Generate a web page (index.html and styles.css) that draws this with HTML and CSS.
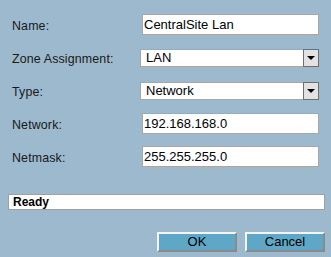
FILE: index.html
```html
<!DOCTYPE html>
<html lang="en">
<head>
    <meta charset="UTF-8">
    <title>Zone</title>
    <link rel="stylesheet" href="styles.css">
</head>
<body>
    <div class="dialog">
        <div class="form">
            <label class="label">Name:</label>
            <input class="field" type="text" value="CentralSite Lan">

            <label class="label">Zone Assignment:</label>
            <div class="select">
                <span class="select-value">LAN</span>
                <span class="select-arrow"></span>
            </div>

            <label class="label">Type:</label>
            <div class="select">
                <span class="select-value">Network</span>
                <span class="select-arrow"></span>
            </div>

            <label class="label">Network:</label>
            <input class="field" type="text" value="192.168.168.0">

            <label class="label">Netmask:</label>
            <input class="field" type="text" value="255.255.255.0">
        </div>

        <div class="status">Ready</div>

        <div class="buttons">
            <button class="btn">OK</button>
            <button class="btn">Cancel</button>
        </div>
    </div>
</body>
</html>
```

FILE: styles.css
```css
body {
    margin: 0;
    padding: 0;
    background-color: #9cb9cd;
    font-family: "Liberation Sans", Arial, sans-serif;
    color: #000;
}

.dialog {
    width: 331px;
    height: 257px;
    padding: 8px 6px 0 8px;
    box-sizing: border-box;
}

.form {
    display: grid;
    grid-template-columns: 132px 179px;
    grid-auto-rows: 33px;
    align-items: center;
}

.label {
    font-size: 12.4px;
    letter-spacing: 0.15px;
    padding-left: 4px;
    padding-top: 2px;
    color: #1a1a1a;
}

.field {
    margin: 0 0 0 2px;
    width: 177px;
    height: 21px;
    box-sizing: border-box;
    border: 1px solid #a7a7a7;
    background: white;
    padding: 0 0 0 1px;
    font-family: inherit;
    font-size: 13px;
    color: #000;
    outline: none;
}

.select {
    display: flex;
    align-items: center;
    height: 18px;
    box-sizing: border-box;
    border: 1px solid #a7a7a7;
    border-right: none;
    background: white;
}

.select-value {
    flex: 1;
    padding-left: 5px;
    font-size: 13px;
}

.select-arrow {
    width: 16px;
    height: 18px;
    box-sizing: border-box;
    border: 1px solid #6f6f6f;
    background: #e2e2e2;
    display: flex;
    justify-content: center;
    align-items: center;
}

.select-arrow::after {
    content: "";
    border-left: 4px solid transparent;
    border-right: 4px solid transparent;
    border-top: 4px solid #000;
    margin-top: 1px;
}

.status {
    margin-top: 21px;
    height: 16px;
    box-sizing: border-box;
    border: 1px solid #a0a0a0;
    background: white;
    font-size: 12px;
    font-weight: bold;
    line-height: 14px;
    padding-left: 4px;
}

.buttons {
    display: flex;
    justify-content: flex-end;
    gap: 8px;
    margin-top: 22px;
}

.btn {
    width: 80px;
    height: 20px;
    box-sizing: border-box;
    background-color: #5fa7c6;
    border: 2px solid;
    border-color: #f4f4f4 #8a8a8a #8a8a8a #f4f4f4;
    font-family: inherit;
    font-size: 13px;
    color: #000;
    padding: 0;
    line-height: 16px;
}
```
